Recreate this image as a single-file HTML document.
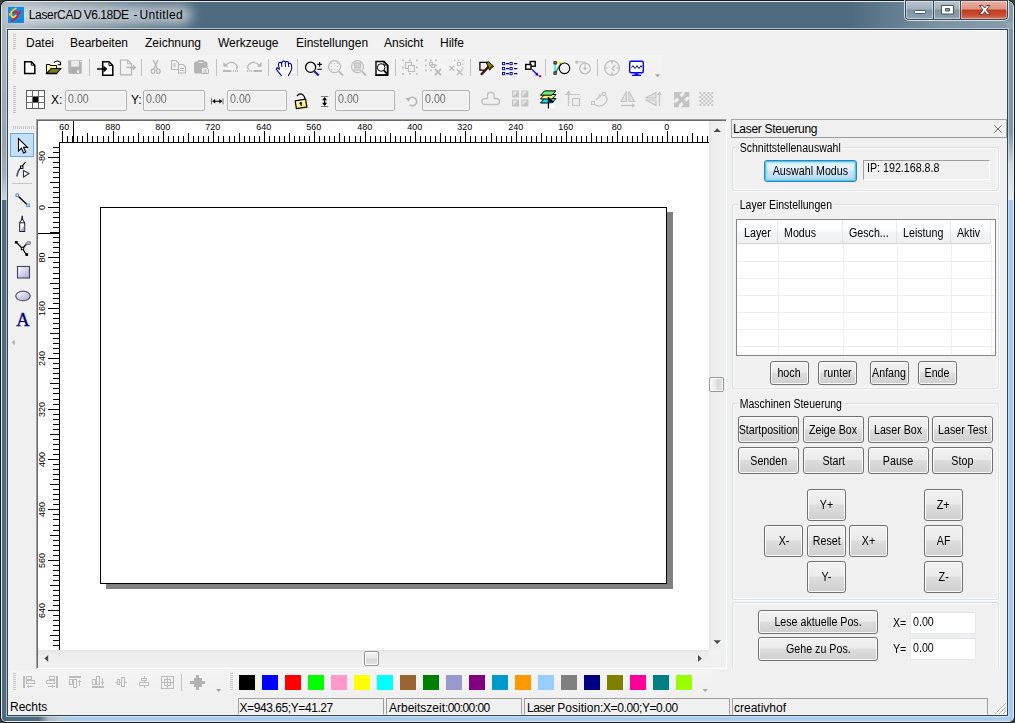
<!DOCTYPE html>
<html lang="de">
<head>
<meta charset="utf-8">
<title>LaserCAD V6.18DE - Untitled</title>
<style>
*{box-sizing:border-box;margin:0;padding:0}
html,body{width:1015px;height:723px;overflow:hidden;background:#3b4341;}
body{font-family:"Liberation Sans",sans-serif;font-size:12px;color:#000;position:relative}
.abs{position:absolute}
svg{position:absolute;overflow:visible}
#win{position:absolute;left:0;top:0;width:1015px;height:723px;border-radius:7px 7px 6px 6px;background:#16191b;overflow:hidden}
#hl{position:absolute;left:1px;top:1px;right:1px;bottom:1px;border-radius:6px 6px 5px 5px;background:#e6ecf0;overflow:hidden}
#glass{position:absolute;left:1px;top:1px;right:1px;bottom:1px;border-radius:5px 5px 4px 4px;overflow:hidden;background:#4f6b7f}
#glow{position:absolute;left:4px;top:3px;width:186px;height:20px;border-radius:10px;background:rgba(255,255,255,.58);filter:blur(6px)}
#title{position:absolute;left:30px;top:7px;font-size:12px;line-height:16px;white-space:pre;color:#000}
#title span{position:absolute;top:0}
#cin{position:absolute;left:6px;top:28px;width:1003px;height:689px;background:rgba(225,236,243,.6)}
#cdk{position:absolute;left:7px;top:29px;width:1001px;height:687px;background:#39454e}
#client{position:absolute;left:8px;top:30px;width:999px;height:685px;background:#f0f0f0;overflow:hidden;box-shadow:inset 0 1px 0 #fafafa}
.grip-v{position:absolute;width:3px;background:repeating-linear-gradient(to bottom,#c6c6c6 0,#c6c6c6 1px,rgba(255,255,255,.0) 1px,rgba(255,255,255,0) 2px)}
.grip-h{position:absolute;height:3px;background:repeating-linear-gradient(to right,#c6c6c6 0,#c6c6c6 1px,rgba(255,255,255,0) 1px,rgba(255,255,255,0) 2px)}
.menu span{position:absolute;top:5px;line-height:16px;font-size:12px;white-space:nowrap}
.sep-v{position:absolute;width:1px;background:#c2c2c2}
.tbbg{position:absolute;background:linear-gradient(to bottom,#f4f4f4,#f2f2f2 50%,#f0f0f0)}
.dlg{font-size:12px;line-height:14px;white-space:nowrap}
.sx{display:inline-block;transform:scaleX(.89);transform-origin:left center;white-space:nowrap}
.ed{position:absolute;height:21px;border:1px solid #b1b1b1;border-radius:2px;background:#f0f0f0;box-shadow:inset 0 0 0 1px #f8f8f8;color:#6d6d6d;font-size:12px;line-height:14px;padding:1px 0 0 2px;white-space:nowrap}
.ed>span{display:inline-block;transform:scaleX(.89);transform-origin:left center}
.lbl{position:absolute;font-size:12px;line-height:14px;white-space:nowrap;transform:scaleX(.89);transform-origin:left center}
.btn{position:absolute;border:1px solid #707070;border-radius:3px;background:linear-gradient(to bottom,#f2f2f2 0,#ebebeb 46%,#dddddd 50%,#cfcfcf 100%);box-shadow:inset 0 0 0 1px rgba(255,255,255,.85);font-size:12px;display:flex;justify-content:center;white-space:nowrap;color:#000}
.btn>span{display:block;flex:none;transform:scaleX(.89);transform-origin:center center}
.btn.def{border-color:#3c7fb1;background:linear-gradient(to bottom,#eef5fa 0,#e0eff8 46%,#cbe4f4 50%,#b7daef 100%);box-shadow:inset 0 0 0 1px #43caf4,inset 0 0 2px 2px rgba(110,215,248,.7)}
.grp{position:absolute;border:1px solid #d7e0e6;border-radius:3px;box-shadow:inset 0 0 0 1px #fbfbfb, 1px 1px 0 0 #fbfbfb}
.grp>b{position:absolute;left:5px;top:-7px;background:#f0f0f0;padding:0 2px;font-weight:normal;font-size:12px;line-height:14px;white-space:nowrap;transform:scaleX(.875);transform-origin:left center}
.sunk{position:absolute;border:1px solid;border-color:#a0a0a0 #fff #fff #a0a0a0}
.sb{font-size:12px;line-height:14px;white-space:nowrap;padding:0 0 0 2px}
.sw{position:absolute;top:645px;width:16px;height:15px}
</style>
</head>
<body>
<div id="win">
 <div id="hl"><div id="glass">
   <!-- left strip lighter area above y=200 -->
   <div class="abs" style="left:0;top:0;width:6px;height:198px;background:linear-gradient(to bottom,#aab5bd 0,#a3afb8 40%,#93a4b0 70%,#9dafbb 87%,#c9d6de 100%)"></div>
   <!-- right strip -->
   <div class="abs" style="right:0;top:20px;width:6px;height:178px;background:linear-gradient(to bottom,#8096a5 0,#8096a5 62%,#c9d8e2 80%,#dfe9f1 100%)"></div>
   <div class="abs" style="right:0;top:198px;width:6px;height:530px;background:#a8cbed"></div>
   <!-- bottom strip -->
   <div class="abs" style="left:0;bottom:0;width:1011px;height:6px;background:linear-gradient(to right,#4f6b7f 0,#4f6b7f 3.6%,#a9b9c6 4.6%,#b9cad6 5.8%,#a9cdee 6.8%,#a9cdee 100%)"></div>
   <!-- title bar shading -->
   <div class="abs" style="left:0;top:0;width:1011px;height:27px;background:linear-gradient(to right,rgba(170,181,189,1) 0,rgba(170,181,189,.0) 150px,rgba(0,0,0,0) 84%,rgba(160,180,194,.55) 93%,rgba(150,168,180,.8) 100%)"></div>
   <div id="glow"></div>
 </div></div>
 <!-- app icon -->
 <svg style="left:8px;top:7px" width="16" height="16" viewBox="0 0 16 16" fill="none" stroke-linecap="round">
  <rect width="16" height="16" fill="#0c8fe6"/>
  <path d="M7.800 1.500C5 2.700 2.900 4.900 2.900 7.100c0 2 1.600 3.400 3.200 3 .8-.2 1.400-.8 1.600-1.500" stroke="#ffd21f" stroke-width="1.700"/>
  <path d="M1.500 6.600v1.400" stroke="#ffd21f" stroke-width="1.100"/>
  <path d="M5.500 5.800c1.100-1.500 3.400-1.500 4.400.2 1 1.800-.2 3.800-2.400 5.400-1.400 1-2.600 1.800-4 2.400" stroke="#f01414" stroke-width="1.800"/>
  <path d="M10.300 8c1.200-1 2-2.600 2.200-4.400" stroke="#f01414" stroke-width="1.100"/>
  <path d="M7 13.400h7" stroke="#1a6fb8" stroke-width=".6"/>
 </svg>
 <div id="title"><span style="left:-1.300px;letter-spacing:-0.32px">LaserCAD </span><span style="left:53.700px;letter-spacing:-0.45px">V6.18DE </span><span style="left:103.400px">- </span><span style="left:109.400px;letter-spacing:0.37px">Untitled</span></div>
 <!-- caption buttons -->
 <div class="abs" style="left:904px;top:0;width:105px;height:21px;border-radius:0 0 5px 5px;background:rgba(235,242,247,.8)"></div>
 <div class="abs" style="left:905px;top:0;width:103px;height:20px;border-radius:0 0 4px 4px;background:#3c4852"></div>
 <div class="abs" style="left:906px;top:1px;width:27px;height:18px;border-radius:0 0 0 3px;background:linear-gradient(to bottom,#b9c6d0 0,#9fb0bd 45%,#7d93a3 50%,#8ea3b2 100%);box-shadow:inset 0 0 0 1px rgba(255,255,255,.45)"></div>
 <div class="abs" style="left:934px;top:1px;width:26px;height:18px;background:linear-gradient(to bottom,#b9c6d0 0,#9fb0bd 45%,#7d93a3 50%,#8ea3b2 100%);box-shadow:inset 0 0 0 1px rgba(255,255,255,.45)"></div>
 <div class="abs" style="left:961px;top:1px;width:46px;height:18px;border-radius:0 0 3px 0;background:linear-gradient(to bottom,#e9b1a4 0,#dc9585 45%,#c03a22 50%,#c8482e 75%,#d6765c 100%);box-shadow:inset 0 0 0 1px rgba(255,255,255,.4)"></div>
 <svg style="left:905px;top:0" width="103" height="20" viewBox="0 0 103 20">
  <rect x="9.500" y="10.500" width="11" height="3" rx="1" fill="#fff" stroke="#4a5660" stroke-width="1"/>
  <path d="M36.500 5.500h12v8.500h-12z M40.500 8.500v2.500h4v-2.500z" fill="#fff" fill-rule="evenodd" stroke="#4a5660" stroke-width="1"/>
  <path d="M74.500 5.500h3.200l2 2.600 2-2.600h3.200l-3.500 4.400 3.600 4.500h-3.300l-2-2.700-2 2.700h-3.300l3.600-4.500z" fill="#fff" stroke="#5a3a3a" stroke-width="1"/>
 </svg>
 <div id="cin"></div><div id="cdk"></div>
 <div id="client">
  <div class="menu">
   <div class="grip-v" style="left:5px;top:4px;height:15px"></div>
   <span style="left:18px">Datei</span>
   <span style="left:62px">Bearbeiten</span>
   <span style="left:137px">Zeichnung</span>
   <span style="left:210px">Werkzeuge</span>
   <span style="left:288px">Einstellungen</span>
   <span style="left:376px">Ansicht</span>
   <span style="left:432px">Hilfe</span>
  </div>
  <!-- toolbar 1 -->
  <div class="tbbg" style="left:2px;top:25px;width:652px;height:27px"></div>
  <div class="grip-v" style="left:5px;top:29px;height:15px"></div>
  <div class="sep-v" style="left:81px;top:29px;height:17px"></div>
  <div class="sep-v" style="left:133px;top:29px;height:17px"></div>
  <div class="sep-v" style="left:208px;top:29px;height:17px"></div>
  <div class="sep-v" style="left:260px;top:29px;height:17px"></div>
  <div class="sep-v" style="left:289px;top:29px;height:17px"></div>
  <div class="sep-v" style="left:387px;top:29px;height:17px"></div>
  <div class="sep-v" style="left:462px;top:29px;height:17px"></div>
  <div class="sep-v" style="left:537px;top:29px;height:17px"></div>
  <div class="sep-v" style="left:589px;top:29px;height:17px"></div>
  <svg style="left:0;top:0" width="999" height="685" viewBox="8 30 999 685" fill="none" stroke-linecap="butt">
   <!-- new -->
   <path d="M24.700 61.700h6.600l3.500 3.500v8.300h-10.100z" fill="#fff" stroke="#000" stroke-width="1.500"/>
   <path d="M31.300 61.700v3.500h3.500" stroke="#000" stroke-width="1"/>
   <!-- open -->
   <path d="M46.500 73.500v-9h3.500v1h6.500v3" fill="#ffff66" stroke="#000" stroke-width="1"/>
   <path d="M47 65h3v1h6v2.500h-5l-4 5z" fill="#ffff9c"/>
   <path d="M46.600 73.300l4.600-4.800h9.600l-4 4.800z" fill="#808000" stroke="#000" stroke-width="1.100"/>
   <path d="M46 73.600h11" stroke="#000" stroke-width="1.300"/>
   <path d="M54 62.600q2.800-3 5.800-.4" stroke="#000" stroke-width="1.100"/>
   <path d="M60.500 61.800v3h-2.800" stroke="#000" stroke-width="1.100"/>
   <!-- save grey -->
   <path d="M68.200 60.300h13.500v13.400h-12.500l-1-1z" fill="#b4b4b4"/>
   <rect x="71.100" y="60.700" width="7.800" height="5.900" fill="#ececec"/>
   <rect x="71.500" y="69.500" width="8" height="4.200" fill="#adadad"/>
   <rect x="77" y="70.200" width="1.900" height="2.700" fill="#f3f3f3"/>
   <rect x="79.900" y="61" width="1.100" height="1.100" fill="#f3f3f3"/>
   <!-- import -->
   <path d="M102.700 61.700h6.300l3.800 3.800v9.800h-10.100z" fill="#fff" stroke="#000" stroke-width="1.500"/>
   <path d="M109 61.700v3.800h3.800" stroke="#000" stroke-width="1"/>
   <path d="M97 69h8" stroke="#000" stroke-width="1.400"/>
   <path d="M103.500 65.500l4 3.500-4 3.500z" fill="#000"/>
   <!-- export grey -->
   <path d="M120.500 60h7.200l3.800 3.800v11h-11z" stroke="#b4b4b4" stroke-width="1.200"/>
   <path d="M127.700 60v3.800h3.800" stroke="#b4b4b4" stroke-width="1"/>
   <path d="M126.500 67.500h8" stroke="#b4b4b4" stroke-width="1.300"/>
   <path d="M133 64.500l3.300 3-3.300 3z" fill="#b4b4b4"/>
   <!-- cut grey -->
   <path d="M153.300 60l4.300 9.600M158 60l-4.300 9.600" stroke="#b4b4b4" stroke-width="1.300"/>
   <ellipse cx="153" cy="71.300" rx="1.800" ry="2.200" stroke="#b4b4b4" stroke-width="1.200"/>
   <ellipse cx="158.300" cy="71.300" rx="1.800" ry="2.200" stroke="#b4b4b4" stroke-width="1.200"/>
   <!-- copy grey -->
   <path d="M171.500 60.500h4.500l2.500 2.500v6.500h-7z" stroke="#b4b4b4" stroke-width="1.100"/>
   <path d="M178.500 64.500h4.500l2.500 2.500v6h-7z" fill="#f3f3f3" stroke="#b4b4b4" stroke-width="1.100"/>
   <path d="M173 64h3M173 66h3M180 68.500h4M180 70.500h4" stroke="#b4b4b4" stroke-width="1"/>
   <!-- paste grey -->
   <rect x="194" y="61.500" width="13.500" height="12" rx="2" fill="#b4b4b4"/>
   <rect x="197.500" y="60" width="6.500" height="2.600" rx="1" fill="#b4b4b4"/>
   <rect x="198.500" y="62" width="4.500" height="1" fill="#e8e8e8"/>
   <path d="M201.500 67.500h5l2 2v4h-7z" fill="#f3f3f3" stroke="#b4b4b4" stroke-width="1"/>
   <path d="M203 70h4M203 72h4" stroke="#b4b4b4" stroke-width="1"/>
   <!-- undo grey -->
   <path d="M225.500 65.300q5.500-5.800 11 -0.500q1.800 2.700-.3 4.800" stroke="#b9b9b9" stroke-width="1.300"/>
   <path d="M223.400 62v4.800h4.800z" fill="#b9b9b9"/>
   <path d="M223 71h8.500" stroke="#b9b9b9" stroke-width="2"/>
   <path d="M233 71h1M235 71h1M237 71h1" stroke="#b9b9b9" stroke-width="2"/>
   <!-- redo grey -->
   <path d="M259.500 65.300q-5.500-5.800-11 -0.500q-1.800 2.700.3 4.800" stroke="#b9b9b9" stroke-width="1.300"/>
   <path d="M261.600 62v4.800h-4.800z" fill="#b9b9b9"/>
   <path d="M253.500 71h8.500" stroke="#b9b9b9" stroke-width="2"/>
   <path d="M247 71h1M249 71h1M251 71h1" stroke="#b9b9b9" stroke-width="2"/>
   <!-- hand -->
   <path d="M281.400 75.600L276.200 69.200l1-1.600 2.200 1.800-1-4.900.8-2.100 1.600-.2.800 1.800.6-2.400 1.800-.7 1.200.9.100.6 1.300-1 1.600.4.500 1.800 1.300-.4 1.400 1.400.4 3.800-1.200 3.200-2.200 4z" fill="#fff"/>
   <path d="M281.400 75.600L276.200 69.200l1-1.600 2.200 1.800-1-4.900.8-2.100 1.600-.2.800 1.800.3 2.600M281.600 64l.6-2.400 1.800-.7 1.200.9.200 4.600M285.300 62.400l1.300-1 1.600.4.600 5M288.700 63.600l1.300-.4 1.400 1.400.4 3.800-1.200 3.200-2.200 4" stroke="#000090" stroke-width="1.050" stroke-linejoin="round" stroke-linecap="round"/>
   <!-- zoom +- -->
   <circle cx="310.600" cy="67.300" r="5.100" stroke="#000" stroke-width="1.250"/>
   <path d="M314.200 71.200l4.500 4.200" stroke="#2424b4" stroke-width="2.200"/>
   <path d="M317.300 64.400h4.700M319.650 62v4.700M317.300 69.300h4.700" stroke="#000" stroke-width="1.100"/>
   <!-- zoom grey 1 -->
   <circle cx="334.500" cy="66.700" r="6" stroke="#bcbcbc" stroke-width="1.200"/>
   <path d="M339 71.500l4 4" stroke="#bcbcbc" stroke-width="1.800"/>
   <path d="M331 63.500h1M334 63.500h1M337 63.500h1M331 66.500h1M337 66.500h1M331 69.500h1M334 69.500h1M337 69.500h1" stroke="#bcbcbc" stroke-width="1"/>
   <!-- zoom grey 2 -->
   <circle cx="357.500" cy="66.700" r="6" stroke="#bcbcbc" stroke-width="1.200"/>
   <path d="M362 71.500l4 4" stroke="#bcbcbc" stroke-width="1.800"/>
   <rect x="354.500" y="63" width="6" height="5" fill="#d2d2d2" stroke="#bcbcbc" stroke-width="1"/>
   <path d="M353.500 70h8" stroke="#bcbcbc" stroke-width="1.200"/>
   <!-- zoom page -->
   <path d="M376 61.500h8l3.500 3.500v10h-11.500z" fill="#fff" stroke="#000" stroke-width="1.400"/>
   <path d="M375.400 75.300h12.800M387.700 65v10.500" stroke="#000" stroke-width="1.600"/>
   <path d="M384 61.500v3.500h3.500" stroke="#000" stroke-width="1"/>
   <circle cx="381.200" cy="67.500" r="3.800" fill="#f8f8f8" stroke="#000" stroke-width="1"/>
   <path d="M383.800 70.400l3 3.200" stroke="#000" stroke-width="1.600"/>
   <!-- group grey -->
   <rect x="405.500" y="62.500" width="6" height="6" stroke="#bcbcbc" stroke-width="1.100"/>
   <rect x="408.500" y="65.500" width="6" height="6" fill="#f1f1f1" stroke="#bcbcbc" stroke-width="1.100"/>
   <g fill="#c0c0c0"><rect x="402" y="59.500" width="1.800" height="1.800"/><rect x="409" y="59.500" width="1.800" height="1.800"/><rect x="416" y="59.500" width="1.800" height="1.800"/><rect x="402" y="66.500" width="1.800" height="1.800"/><rect x="416" y="66.500" width="1.800" height="1.800"/><rect x="402" y="73" width="1.800" height="1.800"/><rect x="409" y="73" width="1.800" height="1.800"/><rect x="416" y="73" width="1.800" height="1.800"/></g>
   <!-- ungroup grey -->
   <g fill="#c0c0c0"><rect x="425" y="59.500" width="1.800" height="1.800"/><rect x="430" y="59.500" width="1.800" height="1.800"/><rect x="435" y="59.500" width="1.800" height="1.800"/><rect x="425" y="64.500" width="1.800" height="1.800"/><rect x="435" y="64.500" width="1.800" height="1.800"/><rect x="425" y="69.500" width="1.800" height="1.800"/><rect x="430" y="69.500" width="1.800" height="1.800"/></g>
   <rect x="429.500" y="62.500" width="3" height="3" stroke="#bcbcbc" stroke-width="1"/>
   <rect x="431.500" y="64.500" width="3" height="3" stroke="#bcbcbc" stroke-width="1"/>
   <path d="M435 69l6 6M441 69l-6 6" stroke="#bcbcbc" stroke-width="1.900"/>
   <!-- xx grey -->
   <g fill="#c8c8c8"><rect x="454" y="59.500" width="1.500" height="1.500"/><rect x="458" y="59.500" width="1.500" height="1.500"/><rect x="462" y="59.500" width="1.500" height="1.500"/><rect x="462" y="63.500" width="1.500" height="1.500"/><rect x="462" y="67" width="1.500" height="1.500"/></g>
   <rect x="457.500" y="62.500" width="3" height="3" stroke="#bcbcbc" stroke-width="1"/>
   <path d="M449.500 66l4.500 4.500M454 66l-4.500 4.500" stroke="#bcbcbc" stroke-width="1.300"/>
   <path d="M457 69.500l5.500 5.500M462.500 69.500l-5.500 5.500" stroke="#bcbcbc" stroke-width="1.500"/>
   <!-- hammer -->
   <path d="M484.500 70.200h-4.600v-7.800h8.800" stroke="#000" stroke-width="1.300"/>
   <path d="M481 74.800l8-8.600" stroke="#000" stroke-width="2.200"/>
   <path d="M481.200 74.600l7.800-8.400" stroke="#800000" stroke-width="1.200"/>
   <path d="M486.500 63l2-1.500 5.300 5-1.200.8-1.700-.4.200 2-1.600 1.200z" fill="#808000" stroke="#000" stroke-width=".9" stroke-linejoin="round"/>
   <!-- list -->
   <g stroke="#000090" stroke-width=".9"><rect x="502.500" y="62.500" width="2.200" height="2.200"/><rect x="510" y="62.500" width="2.200" height="2.200"/><rect x="502.500" y="67.500" width="2.200" height="2.200"/><rect x="510" y="67.500" width="2.200" height="2.200"/><rect x="502.500" y="72.500" width="2.200" height="2.200"/><rect x="510" y="72.500" width="2.200" height="2.200"/>
   <path d="M506 63.600h3M514 63.600h3.300M506 68.600h3M514 68.600h3.300M506 73.600h3M514 73.600h3.300" stroke-width="1.300"/></g>
   <!-- node -->
   <rect x="530.200" y="61.500" width="5" height="4.700" fill="#fff" stroke="#000" stroke-width="1.400"/>
   <rect x="525.700" y="64.500" width="5.300" height="4.700" fill="#fff" stroke="#000" stroke-width="1.400"/>
   <path d="M532 69.500l5.500 5.300" stroke="#0000ff" stroke-width="1.200"/>
   <path d="M538.600 76l-1-3.600-2.500 2.600z" fill="#0000ff"/>
   <rect x="539" y="75.200" width="2.200" height="2" fill="#ff0000"/>
   <!-- path circle -->
   <path d="M555 64v9" stroke="#00e0f0" stroke-width="1.200"/>
   <path d="M556 62.800h6" stroke="#f0e000" stroke-width="1.200"/>
   <path d="M555.500 72.500l5.500-9" stroke="#008000" stroke-width="1.200"/>
   <circle cx="564.500" cy="68.300" r="5.300" stroke="#000" stroke-width="1.100"/>
   <rect x="554" y="61.700" width="2.200" height="2.200" fill="#fff" stroke="#000" stroke-width="1"/>
   <rect x="554" y="72" width="2.200" height="2.200" fill="#fff" stroke="#000" stroke-width="1"/>
   <!-- grey circle path -->
   <rect x="575.300" y="60.800" width="2.700" height="2.700" fill="#bcbcbc"/>
   <path d="M578 62h7v6" stroke="#c4c4c4" stroke-width="1.100"/>
   <circle cx="585" cy="68.500" r="5.300" stroke="#bcbcbc" stroke-width="1.300"/>
   <circle cx="585" cy="68.500" r="1.500" fill="#bcbcbc"/>
   <!-- compass grey -->
   <circle cx="612" cy="68" r="7.300" stroke="#bcbcbc" stroke-width="1.300"/>
   <path d="M612 60.700v3M612 72.300v3M604.700 68h3M616.300 68h3M612 68.500l3.500-3.500M612 68.500l2.500 2.500" stroke="#bcbcbc" stroke-width="1.200"/>
   <!-- monitor -->
   <rect x="629.700" y="61.300" width="13.600" height="11.400" rx="1.500" fill="#fff" stroke="#0000ff" stroke-width="1.400"/>
   <path d="M631.500 67.500l1.500-1.800 2 2.800 2-2.800 2 2.800 2-2.800 1 1.500" stroke="#000060" stroke-width="1"/>
   <path d="M634.500 73.500h4v1.300h2.500v1.200h-9v-1.200h2.500z" fill="#0000ff"/>
   <!-- dropdown -->
   <path d="M654.800 74.300h5.400l-2.700 2.900z" fill="#a8a8a8"/>
  </svg>
  <!-- toolbar 2 -->
  <div class="grip-v" style="left:5px;top:56px;height:28px"></div>
  <div class="abs" style="left:43px;top:63px;font-size:12px;line-height:14px">X:</div>
  <div class="ed" style="left:57px;top:60px;width:62px"><span>0.00</span></div>
  <div class="abs" style="left:123px;top:63px;font-size:12px;line-height:14px">Y:</div>
  <div class="ed" style="left:135px;top:60px;width:62px"><span>0.00</span></div>
  <div class="ed" style="left:219px;top:60px;width:60px"><span>0.00</span></div>
  <div class="ed" style="left:327px;top:60px;width:60px"><span>0.00</span></div>
  <div class="ed" style="left:414px;top:60px;width:48px"><span>0.00</span></div>
  <svg style="left:0;top:0" width="999" height="685" viewBox="8 30 999 685" fill="none">
   <!-- anchor grid -->
   <rect x="26.500" y="90.500" width="18" height="18" fill="#fff" stroke="#5c5c5c" stroke-width="1" shape-rendering="crispEdges"/>
   <path d="M32.500 90.500v18M38.500 90.500v18M26.500 96.500h18M26.500 102.500h18" stroke="#6c6c6c" stroke-width="1" shape-rendering="crispEdges"/>
   <rect x="33" y="97" width="5" height="5" fill="#000"/>
   <!-- width icon -->
   <path d="M211.500 98.300v6M223 98.300v6" stroke="#6a6a6a" stroke-width="1"/>
   <path d="M213 101.300h8.500" stroke="#000" stroke-width="1.100"/>
   <path d="M212.200 101.300l3-2.300v4.600zM222.300 101.300l-3-2.300v4.600z" fill="#000"/>
   <!-- lock -->
   <defs><linearGradient id="lk" x1="0" y1="0" x2="1" y2="1"><stop offset="0" stop-color="#fffef0"/><stop offset=".45" stop-color="#fbf3a0"/><stop offset="1" stop-color="#f2da3a"/></linearGradient></defs>
   <path d="M297.300 95.700q1.700-2.400 4.300-1.600t3.600 5.300" stroke="#000" stroke-width="1.200" stroke-linecap="round"/>
   <path d="M295.200 100.800l10.400-1.700 1.300 8-10.500 1.500z" fill="url(#lk)" stroke="#000" stroke-width="1.200" stroke-linejoin="round"/>
   <circle cx="300.800" cy="103.300" r="1.200" fill="#000"/>
   <path d="M300.900 103.300l.4 2.500" stroke="#000" stroke-width="1.100"/>
   <!-- height icon -->
   <path d="M321 96.500h7.300M321 106.500h7.300" stroke="#7a7a7a" stroke-width="1"/>
   <path d="M324.600 98.500v6" stroke="#000" stroke-width="1.200"/>
   <path d="M324.600 97.100l-2.600 3.100h5.200zM324.600 105.900l-2.600-3.100h5.200z" fill="#000"/>
   <!-- rotate grey -->
   <path d="M408.500 99.500a4.300 4.300 0 1 1 1.200 5.400" stroke="#b4b4b4" stroke-width="1.500"/>
   <path d="M405.300 98.200l4.900-.6-1.200 4.400z" fill="#b4b4b4"/>
   <!-- weld grey -->
   <path d="M487.500 98.500v-4q0-2 2-2h2.500q2 0 2 2v4h2.500q3 0 3 3t-3 3h-11.500q-3 0-3-3t3-3z" stroke="#c0c0c0" stroke-width="1.300"/>
   <!-- 4 squares grey -->
   <g fill="#c4c4c4"><rect x="512" y="90.500" width="7" height="7"/><rect x="521.300" y="90.500" width="7" height="7"/><rect x="512" y="99.500" width="7" height="7"/><rect x="521.300" y="99.500" width="7" height="7"/></g>
   <g fill="#e4e4e4"><path d="M513 91.500h5l-5 5z"/><path d="M522.300 91.500h5l-5 5z"/><path d="M513 100.500h5l-5 5z"/><path d="M522.300 100.500h5l-5 5z"/></g>
   <!-- layers -->
   <path d="M540.500 103l4-4.500h11.500l-4 4.500z" fill="#00e8f0" stroke="#000" stroke-width="1"/>
   <path d="M540.500 99l4-4.500h11.500l-4 4.500z" fill="#f4f080" stroke="#000" stroke-width="1"/>
   <path d="M540.500 95.200l4-4.300h11.500l-4 4.300z" fill="#6cf06c" stroke="#000" stroke-width="1"/>
   <path d="M548.500 97v11.500" stroke="#000" stroke-width="1.300"/>
   <path d="M549 97.500l5 4.800h-5z" fill="#000"/>
   <rect x="549.300" y="103.500" width="5" height="5" fill="#fff"/>
   <!-- align grey -->
   <path d="M565 94.500h15M568.500 91v15" stroke="#c4c4c4" stroke-width="1.200"/>
   <path d="M568.500 90.500l-2.200 3.200h4.400z" fill="#c4c4c4"/>
   <rect x="572.500" y="98.500" width="7" height="7" stroke="#c4c4c4" stroke-width="1.200"/>
   <!-- arc grey -->
   <rect x="591.500" y="101.500" width="3" height="3" stroke="#c4c4c4" stroke-width="1"/>
   <rect x="602.500" y="92.500" width="3" height="3" stroke="#c4c4c4" stroke-width="1"/>
   <path d="M595 104.500q5 3.500 9.500-.5t1-8" stroke="#c4c4c4" stroke-width="1.200"/>
   <path d="M596 100l4.500-4.500" stroke="#c4c4c4" stroke-width="1.200"/>
   <path d="M601.500 94l-3.500.7 2.800 2.800z" fill="#c4c4c4"/>
   <!-- mirror H grey -->
   <path d="M626.500 91.500v10h-5.500zM629 91.500v10h5.500z" stroke="#c4c4c4" stroke-width="1.100" fill="#e2e2e2"/>
   <path d="M621 105.500h12" stroke="#c4c4c4" stroke-width="1.300"/>
   <path d="M635.300 105.500l-3.300-2.500v5z" fill="#c4c4c4"/>
   <!-- mirror V grey -->
   <path d="M656 92.500v5.500h-10.500zM656 105.500v-5.500h-10.500z" stroke="#c4c4c4" stroke-width="1.100" fill="#e2e2e2"/>
   <path d="M659.500 94v12" stroke="#c4c4c4" stroke-width="1.300"/>
   <path d="M659.500 91.500l-2.500 3.500h5z" fill="#c4c4c4"/>
   <!-- resize grey -->
   <path d="M674 92h8.500l-3 3 2.200 2.200 2.800-2.800v-2.400h4.800v4.800h-2.400l-2.800 2.800 2.200 2.200 3-3v8.500h-8.500l3-3-2.200-2.200-2.800 2.800v2.400H674v-4.800h2.400l2.800-2.800-2.200-2.200-3 3z" fill="#c2c2c2"/>
   <!-- checker grey -->
   <g fill="#c6c6c6">
   <rect x="699.3" y="92.0" width="2" height="2"/><rect x="703.3" y="92.0" width="2" height="2"/><rect x="707.3" y="92.0" width="2" height="2"/><rect x="711.3" y="92.0" width="2" height="2"/><rect x="701.3" y="94.0" width="2" height="2"/><rect x="705.3" y="94.0" width="2" height="2"/><rect x="709.3" y="94.0" width="2" height="2"/><rect x="699.3" y="96.0" width="2" height="2"/><rect x="703.3" y="96.0" width="2" height="2"/><rect x="707.3" y="96.0" width="2" height="2"/><rect x="711.3" y="96.0" width="2" height="2"/><rect x="701.3" y="98.0" width="2" height="2"/><rect x="705.3" y="98.0" width="2" height="2"/><rect x="709.3" y="98.0" width="2" height="2"/><rect x="699.3" y="100.0" width="2" height="2"/><rect x="703.3" y="100.0" width="2" height="2"/><rect x="707.3" y="100.0" width="2" height="2"/><rect x="711.3" y="100.0" width="2" height="2"/><rect x="701.3" y="102.0" width="2" height="2"/><rect x="705.3" y="102.0" width="2" height="2"/><rect x="709.3" y="102.0" width="2" height="2"/><rect x="699.3" y="104.0" width="2" height="2"/><rect x="703.3" y="104.0" width="2" height="2"/><rect x="707.3" y="104.0" width="2" height="2"/><rect x="711.3" y="104.0" width="2" height="2"/>
   </g>
  </svg>
  <!-- left toolbar -->
  <div class="grip-h" style="left:5px;top:96px;width:21px"></div>
  <div class="abs" style="left:2px;top:103px;width:24px;height:24px;background:#c4dff6;border:1px solid #62a9ee"></div>
  <div class="abs" style="left:4px;top:153px;width:20px;height:1px;background:#c6c6c6"></div>
  <svg style="left:0;top:0" width="999" height="685" viewBox="8 30 999 685" fill="none">
   <defs>
    <linearGradient id="lv" x1="0" y1="0" x2="1" y2="1"><stop offset="0" stop-color="#fff"/><stop offset="1" stop-color="#a8a8d8"/></linearGradient>
   </defs>
   <!-- pointer -->
   <path d="M18.500 138.500v12.500l3-2.800 2.200 4.800 2-1-2.200-4.600h4z" fill="#fff" stroke="#000" stroke-width="1.100" stroke-linejoin="miter"/>
   <!-- node edit -->
   <path d="M17 176.500q.5-6 4.500-9.500" stroke="#404070" stroke-width="1.500"/>
   <path d="M21.500 167l4-5" stroke="#000" stroke-width="1.200"/>
   <rect x="20.500" y="166" width="2.400" height="2.400" fill="#fff" stroke="#000" stroke-width="1"/>
   <path d="M23.500 170.500v6.500l5.500-3.500z" fill="#fff" stroke="#303050" stroke-width="1.100"/>
   <!-- line -->
   <path d="M17.500 195.500l10.500 10" stroke="#000" stroke-width="1.300"/>
   <rect x="16" y="194" width="2.600" height="2.600" fill="#e6f0fc" stroke="#4583cf" stroke-width=".9"/>
   <rect x="26.700" y="204" width="2.600" height="2.600" fill="#e6f0fc" stroke="#4583cf" stroke-width=".9"/>
   <!-- pen -->
   <path d="M22.200 215.800v3.400" stroke="#000" stroke-width="1.300"/>
   <path d="M22.200 218.600l-2.500 4.200v8.700h5v-8.700z" fill="#fff" stroke="#202030" stroke-width="1.050"/>
   <path d="M19.700 222.800h5" stroke="#202030" stroke-width="1"/>
   <path d="M20.300 231l3.900-5.400v5.400z" fill="#a8a8d8"/>
   <!-- polyline -->
   <path d="M16.500 242.500l6 6 4 6.500M22.500 248.500l5-5.500" stroke="#000" stroke-width="1.200"/>
   <rect x="15" y="241" width="2.600" height="2.600" fill="#000"/>
   <rect x="25.500" y="253.300" width="2.600" height="2.600" fill="#000"/>
   <rect x="21.300" y="247.300" width="2.400" height="2.400" fill="#fff" stroke="#000" stroke-width=".9"/>
   <path d="M25 244.500l2.500-3 3 .5-.5 2.500z" fill="#b8b8e0" stroke="#606080" stroke-width=".8"/>
   <!-- rect -->
   <rect x="17.500" y="266.500" width="12" height="11.500" fill="url(#lv)" stroke="#404060" stroke-width="1.100"/>
   <!-- ellipse -->
   <ellipse cx="23" cy="296" rx="7.200" ry="4.800" fill="url(#lv)" stroke="#404060" stroke-width="1.100"/>
   <!-- small arrow -->
   <path d="M14.800 339.700v5.600l-3.200-2.800z" fill="#b0b0b0"/>
  </svg>
  <div class="abs" style="left:5px;top:281px;width:20px;height:18px;font-family:'Liberation Serif',serif;font-size:18.500px;line-height:18px;color:#000080;text-align:center;-webkit-text-stroke:.35px #000080">A</div>
  <!-- canvas -->
  <div class="abs" style="left:28px;top:89px;width:691px;height:550px;background:#fff;border:1px solid;border-color:#a0a0a0 #fff #fff #a0a0a0"></div>
  <div class="abs" style="left:29px;top:90px;width:689px;height:1px;background:#696969"></div>
  <div class="abs" style="left:29px;top:90px;width:1px;height:548px;background:#696969"></div>
  <div class="abs" style="left:701px;top:91px;width:17px;height:529px;background:linear-gradient(to right,#e6e6e6 0,#eeeeee 20%,#f1f1f1 100%)"></div>
  <div class="abs" style="left:701px;top:347px;width:15px;height:15px;border:1px solid #979797;border-radius:2px;background:linear-gradient(to right,#f5f5f5 0,#e8e8e8 48%,#d6d6d6 52%,#e3e3e3 100%);box-shadow:inset 0 0 0 1px rgba(255,255,255,.8)"></div>
  <div class="abs" style="left:30px;top:620px;width:671px;height:18px;background:linear-gradient(to bottom,#e4e4e4 0,#ededed 25%,#f1f1f1 100%)"></div>
  <div class="abs" style="left:701px;top:620px;width:17px;height:18px;background:#f0f0f0"></div>
  <div class="abs" style="left:356px;top:621px;width:15px;height:15px;border:1px solid #979797;border-radius:2px;background:linear-gradient(to bottom,#f5f5f5 0,#e8e8e8 48%,#d6d6d6 52%,#e3e3e3 100%);box-shadow:inset 0 0 0 1px rgba(255,255,255,.8)"></div>
  <svg style="left:0;top:0" width="999" height="685" viewBox="8 30 999 685" fill="none" shape-rendering="crispEdges">
   <path d="M713.500 132h7.400l-3.700-3.800z" fill="#4a4a4a" shape-rendering="auto"/>
   <path d="M713.500 640.200h7.400l-3.700 3.800z" fill="#4a4a4a" shape-rendering="auto"/>
   <path d="M48.200 655v6.800l-3.800-3.400z" fill="#4a4a4a" shape-rendering="auto"/>
   <path d="M698 655v6.800l3.800-3.400z" fill="#4a4a4a" shape-rendering="auto"/>
   <rect x="106" y="212" width="567" height="377" fill="#808080"/>
   <rect x="100.500" y="207.500" width="566" height="376" fill="#fff" stroke="#000" stroke-width="1"/>
   <path d="M59 142.500h650M59.500 142v508" stroke="#000" stroke-width="1"/>
   <path d="M707.5 136v6M702.5 136v6M697.5 136v6M692.5 133v9M687.5 136v6M682.5 136v6M677.5 136v6M672.5 136v6M667.5 131v11M662.5 136v6M657.5 136v6M652.5 136v6M647.5 136v6M642.5 133v9M637.5 136v6M632.5 136v6M627.5 136v6M622.5 136v6M617.5 131v11M612.5 136v6M607.5 136v6M601.5 136v6M596.5 136v6M591.5 133v9M586.5 136v6M581.5 136v6M576.5 136v6M571.5 136v6M566.5 131v11M561.5 136v6M556.5 136v6M551.5 136v6M546.5 136v6M541.5 133v9M536.5 136v6M531.5 136v6M526.5 136v6M521.5 136v6M516.5 131v11M511.5 136v6M506.5 136v6M501.5 136v6M496.5 136v6M491.5 133v9M486.5 136v6M481.5 136v6M475.5 136v6M470.5 136v6M465.5 131v11M460.5 136v6M455.5 136v6M450.5 136v6M445.5 136v6M440.5 133v9M435.5 136v6M430.5 136v6M425.5 136v6M420.5 136v6M415.5 131v11M410.5 136v6M405.5 136v6M400.5 136v6M395.5 136v6M390.5 133v9M385.5 136v6M380.5 136v6M375.5 136v6M370.5 136v6M365.5 131v11M360.5 136v6M355.5 136v6M349.5 136v6M344.5 136v6M339.5 133v9M334.5 136v6M329.5 136v6M324.5 136v6M319.5 136v6M314.5 131v11M309.5 136v6M304.5 136v6M299.5 136v6M294.5 136v6M289.5 133v9M284.5 136v6M279.5 136v6M274.5 136v6M269.5 136v6M264.5 131v11M259.5 136v6M254.5 136v6M249.5 136v6M244.5 136v6M239.5 133v9M234.5 136v6M229.5 136v6M223.5 136v6M218.5 136v6M213.5 131v11M208.5 136v6M203.5 136v6M198.5 136v6M193.5 136v6M188.5 133v9M183.5 136v6M178.5 136v6M173.5 136v6M168.5 136v6M163.5 131v11M158.5 136v6M153.5 136v6M148.5 136v6M143.5 136v6M138.5 133v9M133.5 136v6M128.5 136v6M123.5 136v6M118.5 136v6M113.5 131v11M108.5 136v6M103.5 136v6M97.5 136v6M92.5 136v6M87.5 133v9M82.5 136v6M77.5 136v6M72.5 136v6M67.5 136v6M62.5 131v11" stroke="#000" stroke-width="1"/>
   <path d="M53 147.5h6M53 152.5h6M48 157.5h11M53 162.5h6M53 167.5h6M53 172.5h6M53 177.5h6M50 182.5h9M53 187.5h6M53 192.5h6M53 197.5h6M53 202.5h6M48 207.5h11M53 212.5h6M53 217.5h6M53 222.5h6M53 227.5h6M50 232.5h9M53 237.5h6M53 242.5h6M53 247.5h6M53 252.5h6M48 257.5h11M53 262.5h6M53 267.5h6M53 273.5h6M53 278.5h6M50 283.5h9M53 288.5h6M53 293.5h6M53 298.5h6M53 303.5h6M48 308.5h11M53 313.5h6M53 318.5h6M53 323.5h6M53 328.5h6M50 333.5h9M53 338.5h6M53 343.5h6M53 348.5h6M53 353.5h6M48 358.5h11M53 363.5h6M53 368.5h6M53 373.5h6M53 378.5h6M50 383.5h9M53 388.5h6M53 393.5h6M53 399.5h6M53 404.5h6M48 409.5h11M53 414.5h6M53 419.5h6M53 424.5h6M53 429.5h6M50 434.5h9M53 439.5h6M53 444.5h6M53 449.5h6M53 454.5h6M48 459.5h11M53 464.5h6M53 469.5h6M53 474.5h6M53 479.5h6M50 484.5h9M53 489.5h6M53 494.5h6M53 499.5h6M53 504.5h6M48 509.5h11M53 514.5h6M53 519.5h6M53 525.5h6M53 530.5h6M50 535.5h9M53 540.5h6M53 545.5h6M53 550.5h6M53 555.5h6M48 560.5h11M53 565.5h6M53 570.5h6M53 575.5h6M53 580.5h6M50 585.5h9M53 590.5h6M53 595.5h6M53 600.5h6M53 605.5h6M48 610.5h11M53 615.5h6M53 620.5h6M53 625.5h6M53 630.5h6M50 635.5h9M53 640.5h6M53 645.5h6" stroke="#000" stroke-width="1"/>
   <path d="M73.500 121v22M38 233.500h22" stroke="#000" stroke-width="1"/>
  </svg>
  <div class="abs" style="left:51px;top:91px;width:650px;height:22px;overflow:hidden;font-size:9px;line-height:9px">
   <span class="abs" style="left:592.7px;top:1.500px;width:30px;text-align:center">0</span>
   <span class="abs" style="left:542.7px;top:1.500px;width:30px;text-align:center">80</span>
   <span class="abs" style="left:491.7px;top:1.500px;width:30px;text-align:center">160</span>
   <span class="abs" style="left:441.7px;top:1.500px;width:30px;text-align:center">240</span>
   <span class="abs" style="left:390.7px;top:1.500px;width:30px;text-align:center">320</span>
   <span class="abs" style="left:340.7px;top:1.500px;width:30px;text-align:center">400</span>
   <span class="abs" style="left:290.7px;top:1.500px;width:30px;text-align:center">480</span>
   <span class="abs" style="left:239.7px;top:1.500px;width:30px;text-align:center">560</span>
   <span class="abs" style="left:189.7px;top:1.500px;width:30px;text-align:center">640</span>
   <span class="abs" style="left:138.7px;top:1.500px;width:30px;text-align:center">720</span>
   <span class="abs" style="left:88.7px;top:1.500px;width:30px;text-align:center">800</span>
   <span class="abs" style="left:38.7px;top:1.500px;width:30px;text-align:center">880</span>
   <span class="abs" style="left:-12.3px;top:1.500px;width:30px;text-align:center">960</span>
  </div>
  <div class="abs" style="left:30px;top:113px;width:22px;height:508px;overflow:hidden;font-size:9px;line-height:9px">
   <span class="abs" style="left:-11px;top:10.0px;width:30px;height:9px;text-align:center;transform:rotate(-90deg)">-80</span>
   <span class="abs" style="left:-11px;top:60.0px;width:30px;height:9px;text-align:center;transform:rotate(-90deg)">0</span>
   <span class="abs" style="left:-11px;top:110.0px;width:30px;height:9px;text-align:center;transform:rotate(-90deg)">80</span>
   <span class="abs" style="left:-11px;top:161.0px;width:30px;height:9px;text-align:center;transform:rotate(-90deg)">160</span>
   <span class="abs" style="left:-11px;top:211.0px;width:30px;height:9px;text-align:center;transform:rotate(-90deg)">240</span>
   <span class="abs" style="left:-11px;top:262.0px;width:30px;height:9px;text-align:center;transform:rotate(-90deg)">320</span>
   <span class="abs" style="left:-11px;top:312.0px;width:30px;height:9px;text-align:center;transform:rotate(-90deg)">400</span>
   <span class="abs" style="left:-11px;top:362.0px;width:30px;height:9px;text-align:center;transform:rotate(-90deg)">480</span>
   <span class="abs" style="left:-11px;top:413.0px;width:30px;height:9px;text-align:center;transform:rotate(-90deg)">560</span>
   <span class="abs" style="left:-11px;top:463.0px;width:30px;height:9px;text-align:center;transform:rotate(-90deg)">640</span>
  </div>
  <!-- right panel -->
  <div class="abs" style="left:723px;top:89px;width:276px;height:19px;border:1px solid #a5a5a5;border-bottom-color:#9c9c9c"></div>
  <div class="abs" style="left:725px;top:92px;font-size:12px;line-height:14px;white-space:nowrap;letter-spacing:-0.3px">Laser Steuerung</div>
  <svg style="left:986px;top:95px" width="8" height="8" viewBox="0 0 8 8"><path d="M.3.3l7.400 7.400M7.700.3L.3 7.700" stroke="#6e6e6e" stroke-width="1"/></svg>
  <div class="grp" style="left:724px;top:117px;width:267px;height:44px;"><b>Schnittstellenauswahl</b></div>
  <div class="btn def" style="left:756px;top:130px;width:93px;height:22px;line-height:20px"><span>Auswahl Modus</span></div>
  <div class="sunk dlg" style="left:855px;top:130px;width:127px;height:20px;padding:0px 0 0 2.500px"><span class="sx">IP: 192.168.8.8</span></div>
  <div class="grp" style="left:724px;top:174px;width:267px;height:185px;"><b>Layer Einstellungen</b></div>
  <div class="abs" style="left:728px;top:189px;width:260px;height:137px;border:1px solid #828790;background:#fff;overflow:hidden">
   <div class="abs" style="left:0;top:0;width:254px;height:24px;background:linear-gradient(to bottom,#fff 0,#fff 40%,#f3f4f6 55%,#eff0f2 100%);border-bottom:1px solid #d5d5d5"></div>
   <div class="abs" style="left:40px;top:0;width:1px;height:23px;background:linear-gradient(to bottom,#f0f0f0,#dedfe1)"></div>
   <div class="abs" style="left:105px;top:0;width:1px;height:23px;background:linear-gradient(to bottom,#f0f0f0,#dedfe1)"></div>
   <div class="abs" style="left:159px;top:0;width:1px;height:23px;background:linear-gradient(to bottom,#f0f0f0,#dedfe1)"></div>
   <div class="abs" style="left:213px;top:0;width:1px;height:23px;background:linear-gradient(to bottom,#f0f0f0,#dedfe1)"></div>
   <div class="abs" style="left:253px;top:0;width:1px;height:23px;background:linear-gradient(to bottom,#f0f0f0,#dedfe1)"></div>
   <div class="abs" style="left:41px;top:24px;width:1px;height:112px;background:#f0f0f0"></div>
   <div class="abs" style="left:106px;top:24px;width:1px;height:112px;background:#f0f0f0"></div>
   <div class="abs" style="left:160px;top:24px;width:1px;height:112px;background:#f0f0f0"></div>
   <div class="abs" style="left:214px;top:24px;width:1px;height:112px;background:#f0f0f0"></div>
   <div class="abs" style="left:254px;top:24px;width:1px;height:112px;background:#f0f0f0"></div>
   <div class="abs" style="left:0;top:41px;width:258px;height:1px;background:#f0f0f0"></div>
   <div class="abs" style="left:0;top:58px;width:258px;height:1px;background:#f0f0f0"></div>
   <div class="abs" style="left:0;top:75px;width:258px;height:1px;background:#f0f0f0"></div>
   <div class="abs" style="left:0;top:92px;width:258px;height:1px;background:#f0f0f0"></div>
   <div class="abs" style="left:0;top:109px;width:258px;height:1px;background:#f0f0f0"></div>
   <div class="abs" style="left:0;top:126px;width:258px;height:1px;background:#f0f0f0"></div>
   <div class="lbl" style="left:6.5px;top:6px">Layer</div>
   <div class="lbl" style="left:47.0px;top:6px">Modus</div>
   <div class="lbl" style="left:111.5px;top:6px">Gesch...</div>
   <div class="lbl" style="left:166.0px;top:6px">Leistung</div>
   <div class="lbl" style="left:219.5px;top:6px">Aktiv</div>
  </div>
  <div class="btn " style="left:762px;top:331px;width:39px;height:24px;line-height:22px"><span>hoch</span></div>
  <div class="btn " style="left:810px;top:331px;width:39px;height:24px;line-height:22px"><span>runter</span></div>
  <div class="btn " style="left:862px;top:331px;width:39px;height:24px;line-height:22px"><span>Anfang</span></div>
  <div class="btn " style="left:910px;top:331px;width:39px;height:24px;line-height:22px"><span>Ende</span></div>
  <div class="grp" style="left:724px;top:373px;width:267px;height:197px;"><b>Maschinen Steuerung</b></div>
  <div class="btn " style="left:730px;top:386px;width:61px;height:27px;line-height:26px"><span>Startposition</span></div>
  <div class="btn " style="left:795px;top:386px;width:61px;height:27px;line-height:26px"><span>Zeige Box</span></div>
  <div class="btn " style="left:860px;top:386px;width:61px;height:27px;line-height:26px"><span>Laser Box</span></div>
  <div class="btn " style="left:924px;top:386px;width:61px;height:27px;line-height:26px"><span>Laser Test</span></div>
  <div class="btn " style="left:730px;top:417px;width:61px;height:27px;line-height:26px"><span>Senden</span></div>
  <div class="btn " style="left:795px;top:417px;width:61px;height:27px;line-height:26px"><span>Start</span></div>
  <div class="btn " style="left:860px;top:417px;width:61px;height:27px;line-height:26px"><span>Pause</span></div>
  <div class="btn " style="left:924px;top:417px;width:61px;height:27px;line-height:26px"><span>Stop</span></div>
  <div class="btn " style="left:799px;top:459px;width:39px;height:32px;line-height:30px"><span>Y+</span></div>
  <div class="btn " style="left:756px;top:495px;width:39px;height:32px;line-height:30px"><span>X-</span></div>
  <div class="btn " style="left:799px;top:495px;width:39px;height:32px;line-height:30px"><span>Reset</span></div>
  <div class="btn " style="left:841px;top:495px;width:39px;height:32px;line-height:30px"><span>X+</span></div>
  <div class="btn " style="left:799px;top:531px;width:39px;height:32px;line-height:30px"><span>Y-</span></div>
  <div class="btn " style="left:916px;top:459px;width:39px;height:32px;line-height:30px"><span>Z+</span></div>
  <div class="btn " style="left:916px;top:495px;width:39px;height:32px;line-height:30px"><span>AF</span></div>
  <div class="btn " style="left:916px;top:531px;width:39px;height:32px;line-height:30px"><span>Z-</span></div>
  <div class="abs" style="left:724px;top:572px;width:268px;height:66px;overflow:hidden"><div class="grp" style="left:0;top:0;width:267px;height:90px"></div></div>
  <div class="btn " style="left:750px;top:580px;width:120px;height:24px;line-height:22px"><span>Lese aktuelle Pos.</span></div>
  <div class="btn " style="left:750px;top:607px;width:120px;height:24px;line-height:22px"><span>Gehe zu Pos.</span></div>
  <div class="lbl" style="left:885px;top:586px">X=</div>
  <div class="lbl" style="left:885px;top:612px">Y=</div>
  <div class="abs dlg" style="left:902px;top:582px;width:66px;height:22px;background:#fff;border:1px solid #e3e9ef;border-top-color:#dfe4ea;padding:2px 0 0 2px"><span class="sx">0.00</span></div>
  <div class="abs dlg" style="left:902px;top:608px;width:66px;height:22px;background:#fff;border:1px solid #e3e9ef;border-top-color:#dfe4ea;padding:2px 0 0 2px"><span class="sx">0.00</span></div>
  <!-- bottom toolbar -->
  <div class="tbbg" style="left:2px;top:640px;width:215px;height:26px"></div>
  <div class="tbbg" style="left:219px;top:640px;width:485px;height:26px"></div>
  <div class="grip-v" style="left:5px;top:643px;height:17px"></div>
  <div class="grip-v" style="left:222px;top:643px;height:17px"></div>
  <div class="sep-v" style="left:173px;top:644px;height:17px"></div>
  <div class="sw" style="left:231px;background:#000000"></div>
  <div class="sw" style="left:254px;background:#0000ff"></div>
  <div class="sw" style="left:277px;background:#ff0000"></div>
  <div class="sw" style="left:300px;background:#00ff00"></div>
  <div class="sw" style="left:323px;background:#ff99cc"></div>
  <div class="sw" style="left:346px;background:#ffff00"></div>
  <div class="sw" style="left:369px;background:#00ffff"></div>
  <div class="sw" style="left:392px;background:#996633"></div>
  <div class="sw" style="left:415px;background:#008000"></div>
  <div class="sw" style="left:438px;background:#9999cc"></div>
  <div class="sw" style="left:461px;background:#800080"></div>
  <div class="sw" style="left:484px;background:#0099cc"></div>
  <div class="sw" style="left:507px;background:#ff9900"></div>
  <div class="sw" style="left:530px;background:#99ccff"></div>
  <div class="sw" style="left:553px;background:#808080"></div>
  <div class="sw" style="left:576px;background:#000080"></div>
  <div class="sw" style="left:599px;background:#808000"></div>
  <div class="sw" style="left:622px;background:#ff0099"></div>
  <div class="sw" style="left:645px;background:#008080"></div>
  <div class="sw" style="left:668px;background:#99ff00"></div>
  <svg style="left:0;top:0" width="999" height="685" viewBox="8 30 999 685" fill="none" shape-rendering="crispEdges">
   <g stroke="#bbbbbb" stroke-width="1" fill="none">
   <path d="M24 676v12" stroke-width="2"/><rect x="26.500" y="676.500" width="5" height="2.500"/><rect x="26.500" y="680.500" width="8" height="3"/><path d="M26.500 686.500h6.500M28.500 685v3"/>
   <path d="M57 676v12" stroke-width="2"/><rect x="49.500" y="676.500" width="5" height="2.500"/><rect x="46.500" y="680.500" width="8" height="3"/><path d="M48 686.500h6.500M52.500 685v3"/>
   <path d="M69 677h12" stroke-width="2"/><rect x="69.500" y="679.500" width="2.500" height="5"/><rect x="73.500" y="679.500" width="3" height="8"/><path d="M79.500 679.500v6.500M78 681.500h3"/>
   <path d="M92 687h12" stroke-width="2"/><rect x="92.500" y="679.500" width="2.500" height="5"/><rect x="96.500" y="676.500" width="3" height="8"/><path d="M102.500 678v6.500M101 682.500h3"/>
   <path d="M115 682.500h12"/><rect x="117.500" y="679.500" width="2" height="5" fill="#f1f1f1"/><rect x="121.500" y="677.500" width="3" height="9" fill="#f1f1f1"/>
   <path d="M144.500 675.500v12"/><rect x="141.500" y="678.500" width="5" height="2" fill="#f1f1f1"/><rect x="139.500" y="682.500" width="9" height="3" fill="#f1f1f1"/>
   <rect x="161.500" y="676.500" width="12" height="12"/><path d="M167.500 676.500v12M161.500 682.500h12"/><rect x="164.500" y="679.500" width="6" height="6"/>
   </g>
   <path d="M196 675h2.500v3h3v3h3.500v2.500h-3.500v3h-3v3.500h-2.500v-3.500h-2.500v-3h-3.500v-2.500h3.500v-3h2.500z" fill="#b2b2b2"/>
   <path d="M216 689h5.400l-2.700 2.900z" fill="#a8a8a8" shape-rendering="auto"/>
   <path d="M702.500 689h5.400l-2.700 2.900z" fill="#a8a8a8" shape-rendering="auto"/>
  </svg>
  <!-- status bar -->
  <div class="abs sb" style="left:0px;top:670px">Rechts</div>
  <div class="sunk sb" style="border-right-color:#a0a0a0;left:230px;top:668px;width:146px;height:17px;padding-top:2px;padding-left:0.5px;letter-spacing:-0.42px">X=943.65;Y=41.27</div>
  <div class="sunk sb" style="border-right-color:#a0a0a0;left:378px;top:668px;width:136px;height:17px;padding-top:2px;padding-left:2.0px;letter-spacing:0.00px">Arbeitszeit<span style="letter-spacing:-0.62px">:00:00:00</span></div>
  <div class="sunk sb" style="border-right-color:#a0a0a0;left:516px;top:668px;width:206px;height:17px;padding-top:2px;padding-left:2.0px;letter-spacing:0.00px"><span style="letter-spacing:-0.5px">Laser </span>Position<span style="letter-spacing:-0.4px">:X=0.00;Y=0.00</span></div>
  <div class="sunk sb" style="border-right-color:#a0a0a0;left:724px;top:668px;width:256px;height:17px;padding-top:2px;padding-left:1.0px;letter-spacing:0.00px">creativhof</div>
  <svg style="left:986px;top:672px" width="13" height="13" viewBox="0 0 13 13"><path d="M12 1L1 12M12 5L5 12M12 9L9 12" stroke="#b0b0b0" stroke-width="1"/><path d="M13 1L1 13M13 5L5 13M13 9L9 13" stroke="#fff" stroke-width="1"/></svg>
 </div>
</div>
</body>
</html>
